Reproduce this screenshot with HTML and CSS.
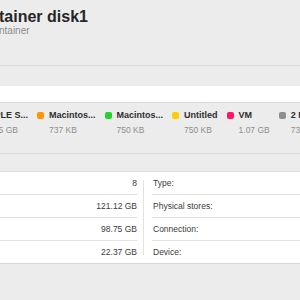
FILE: index.html
```html
<!DOCTYPE html>
<html lang="en">
<head>
    <meta charset="UTF-8">
    <meta name="viewport" content="width=device-width, initial-scale=1.0">
    <title>Container disk1</title>
<link rel="stylesheet" href="styles.css">
</head>
<body>
    <div class="window">
        <div class="header">
            <h1 class="title">tainer disk1</h1>
            <p class="subtitle">ntainer</p>
        </div>

        <div class="usage">
            <div class="usage-bar"></div>
            <ul class="legend">
                <li class="legend-item">
                    <span class="dot dot-first"></span>
                    <div class="legend-text">
                        <span class="legend-name">APPLE S...</span>
                        <span class="legend-size">17.45 GB</span>
                    </div>
                </li>
                <li class="legend-item">
                    <span class="dot dot-orange"></span>
                    <div class="legend-text">
                        <span class="legend-name">Macintos...</span>
                        <span class="legend-size">737 KB</span>
                    </div>
                </li>
                <li class="legend-item">
                    <span class="dot dot-green"></span>
                    <div class="legend-text">
                        <span class="legend-name">Macintos...</span>
                        <span class="legend-size">750 KB</span>
                    </div>
                </li>
                <li class="legend-item">
                    <span class="dot dot-yellow"></span>
                    <div class="legend-text">
                        <span class="legend-name">Untitled</span>
                        <span class="legend-size">750 KB</span>
                    </div>
                </li>
                <li class="legend-item">
                    <span class="dot dot-pink"></span>
                    <div class="legend-text">
                        <span class="legend-name">VM</span>
                        <span class="legend-size">1.07 GB</span>
                    </div>
                </li>
                <li class="legend-item">
                    <span class="dot dot-gray"></span>
                    <div class="legend-text">
                        <span class="legend-name">2 Macintosh</span>
                        <span class="legend-size">737 KB</span>
                    </div>
                </li>
            </ul>
        </div>

        <div class="spacer"></div>

        <div class="info">
            <div class="info-col info-left">
                <div class="info-row">8</div>
                <div class="info-row">121.12 GB</div>
                <div class="info-row">98.75 GB</div>
                <div class="info-row">22.37 GB</div>
            </div>
            <div class="info-divider"></div>
            <div class="info-col info-right">
                <div class="info-row">Type:</div>
                <div class="info-row">Physical stores:</div>
                <div class="info-row">Connection:</div>
                <div class="info-row">Device:</div>
            </div>
        </div>
    </div>
</body>
</html>
```

FILE: styles.css
```css
/* styles.css */

body {
    font-family: "Liberation Sans", Arial, sans-serif;
    background-color: #ececec;
    margin: 0;
    width: 300px;
    height: 300px;
    overflow: hidden;
}

.window {
    width: 300px;
    overflow: hidden;
}

.header {
    padding: 8px 0 28px 0;
    border-bottom: 1px solid #dcdcdc;
}

.title {
    font-size: 16px;
    line-height: 18px;
    font-weight: bold;
    color: #262626;
    margin: 0 0 0 -1px;
}

.subtitle {
    font-size: 10px;
    line-height: 12px;
    color: #8c8c8c;
    margin: -1px 0 0 -1px;
}

.usage {
    padding-top: 20px;
    border-bottom: 1px solid #dcdcdc;
}

.usage-bar {
    height: 16px;
    background-color: #ffffff;
    border-bottom: 1px solid #dadada;
}

.legend {
    list-style: none;
    display: flex;
    gap: 9px;
    margin: 0 0 0 -30px;
    padding: 7px 0 17px 0;
    white-space: nowrap;
}

.legend-item {
    display: flex;
    align-items: flex-start;
}

.dot {
    width: 7px;
    height: 7px;
    border-radius: 2px;
    margin: 2px 5px 0 0;
    flex-shrink: 0;
}

.dot-first { background-color: #1e88ff; }
.dot-orange { background-color: #ff9500; }
.dot-green { background-color: #28d12b; }
.dot-yellow { background-color: #ffcc00; }
.dot-pink { background-color: #ff1560; }
.dot-gray { background-color: #8e8e8e; }

.legend-text {
    display: flex;
    flex-direction: column;
    gap: 4px;
}

.legend-name {
    font-size: 9px;
    line-height: 11px;
    font-weight: bold;
    color: #2e2e2e;
}

.legend-size {
    font-size: 8.5px;
    line-height: 11px;
    color: #8e8e8e;
}

.spacer {
    height: 17px;
    border-bottom: 1px solid #dedede;
}

.info {
    display: flex;
    background-color: #ffffff;
    border-bottom: 1px solid #d6d6d6;
}

.info-left {
    width: 137px;
    text-align: right;
}

.info-right {
    flex: 1;
}

.info-row {
    height: 22px;
    line-height: 22px;
    font-size: 8.5px;
    color: #3c3c3c;
    border-bottom: 1px solid #e2e2e2;
}

.info-right .info-row {
    padding-left: 1px;
}

.info-row:last-child {
    border-bottom: none;
}

.info-divider {
    width: 1px;
    background-color: #e2e2e2;
    margin: 8px 8px 8px 6px;
}
```
